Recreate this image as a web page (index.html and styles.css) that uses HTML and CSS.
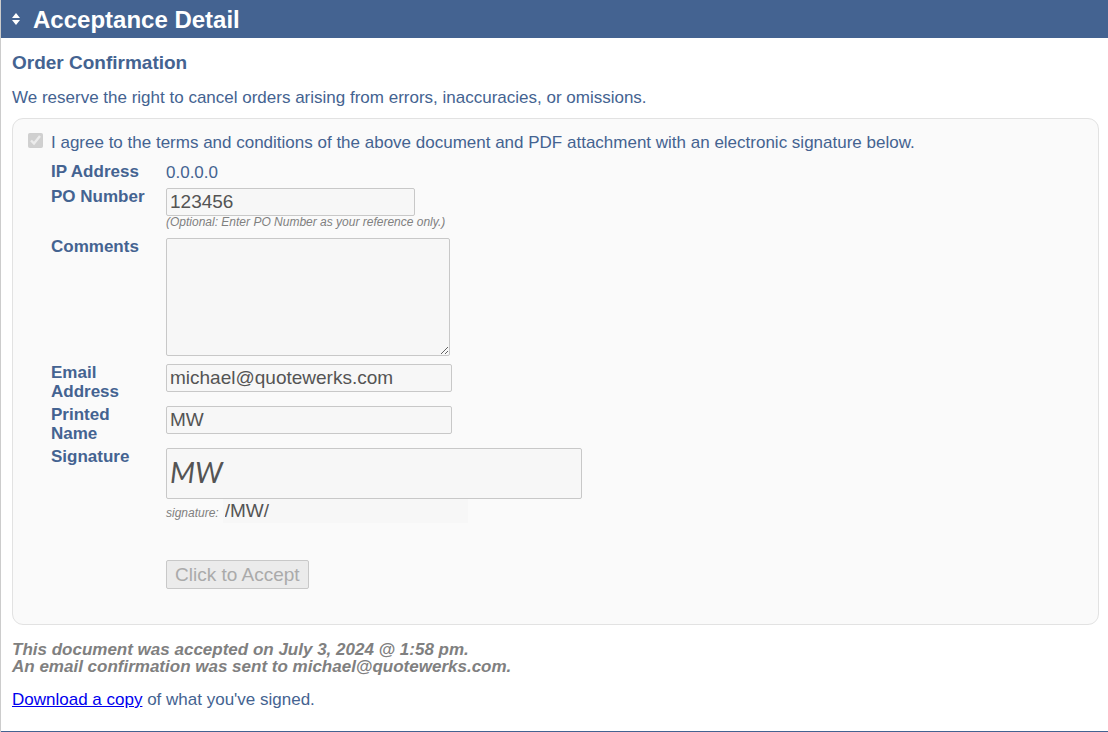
FILE: index.html
```
<!DOCTYPE html>
<html lang="en">
<head>
  <meta charset="UTF-8">
  <meta name="viewport" content="width=device-width, initial-scale=1.0">
  <title>Acceptance Detail</title>
  <link rel="stylesheet" href="styles.css">
</head>
<body>
  <main class="page">
    <header class="section-header">
      <svg class="toggle" viewBox="0 0 10 12" aria-hidden="true">
        <path d="M5 0 L9 5 H1 Z M1 7 H9 L5 12 Z" fill="#fff"/>
      </svg>
      <h1>Acceptance Detail</h1>
    </header>

    <div class="content">
      <h2>Order Confirmation</h2>
      <p class="notice">We reserve the right to cancel orders arising from errors, inaccuracies, or omissions.</p>

      <form class="panel">
        <div class="agree">
          <input type="checkbox" id="agree" checked disabled>
          <label for="agree">I agree to the terms and conditions of the above document and PDF attachment with an electronic signature below.</label>
        </div>

        <div class="fields">
          <span class="name">IP Address</span>
          <div class="field ip">0.0.0.0</div>

          <label class="name" for="po">PO Number</label>
          <div class="field po">
            <input type="text" id="po" class="box short" value="123456" disabled>
            <span class="hint">(Optional: Enter PO Number as your reference only.)</span>
          </div>

          <label class="name" for="comments">Comments</label>
          <div class="field comments">
            <textarea id="comments" class="box" disabled></textarea>
          </div>

          <label class="name" for="email">Email Address</label>
          <div class="field">
            <input type="text" id="email" class="box medium" value="michael@quotewerks.com" disabled>
          </div>

          <label class="name" for="printed">Printed Name</label>
          <div class="field">
            <input type="text" id="printed" class="box medium" value="MW" disabled>
          </div>

          <label class="name" for="signature">Signature</label>
          <div class="field">
            <input type="text" id="signature" class="box sign" value="MW" disabled>
            <div class="typed">
              <label class="hint" for="typed">signature:</label>
              <input type="text" id="typed" value="/MW/" disabled>
            </div>
            <button type="submit" class="accept" disabled>Click to Accept</button>
          </div>
        </div>
      </form>

      <p class="accepted">This document was accepted on July 3, 2024 @ 1:58 pm.<br>An email confirmation was sent to michael@quotewerks.com.</p>
      <p class="download"><a href="#">Download a copy</a> of what you've signed.</p>
    </div>
  </main>
</body>
</html>
```
FILE: styles.css
```
* { box-sizing: border-box; }
body { margin: 0; font: 17px/19px Arial, "Liberation Sans", sans-serif; color: #446391; background: #fff; }
h1, h2, p { margin: 0; }
.page { border-left: 1px solid #ccc; }

.section-header { display: flex; align-items: center; gap: 12px; height: 38px; padding: 0 10px; background: #446391; color: #fff; }
.section-header h1 { padding-top: 2px; font-size: 24px; line-height: 28px; }
.toggle { width: 10px; height: 12px; }

.content { padding: 14px 9px 22px 11px; border-bottom: 1px solid #446391; }
.content h2 { font-size: 19px; line-height: 22px; }
.notice { margin: 14px 0 11px; }

/* Signed form */
.panel { padding: 14px 15px 35px; border: 1px solid #e2e2e2; border-radius: 11px; background: #fafafa; }
.agree { display: flex; align-items: flex-start; gap: 8px; }
.agree input { width: 15px; height: 15px; margin: 0; }
.fields { display: grid; grid-template-columns: 107px 1fr; column-gap: 8px; row-gap: 4px; margin: 10px 0 0 23px; }
.name { max-width: 96px; font-weight: bold; }
.field { padding-top: 1px; }
.ip { padding-bottom: 1px; }
.po { padding-bottom: 5px; }
.comments { padding-bottom: 3px; }
.hint { font-size: 12px; line-height: 12px; font-style: italic; color: gray; }
.po .hint { display: block; }

.box { display: block; height: 28px; margin: 0; padding: 1px 3px; border: 1px solid #c8c8c8; border-radius: 2px; background: #f7f7f7; color: #545454; font: 19px Arial, "Liberation Sans", sans-serif; }
.short { width: 249px; }
.medium { width: 286px; margin-bottom: 9px; }
textarea.box { width: 284px; height: 118px; resize: both; }
.box.sign { width: 416px; height: 51px; padding-bottom: 6px; font: italic 29px "Segoe Print", Lato, cursive; }

.typed { display: flex; align-items: baseline; gap: 4px; }
.typed input { width: 245px; height: 24px; padding: 0 2px; border: 0; background: #f7f7f7; color: #545454; font: 19px Arial, "Liberation Sans", sans-serif; }
.accept { display: block; height: 29px; margin-top: 37px; padding: 1px 8px; border: 1px solid #c8c8c8; border-radius: 2px; background: #ebebeb; color: #aaa; font: 19px Arial, "Liberation Sans", sans-serif; }

.accepted { margin-top: 16px; line-height: 17px; font-weight: bold; font-style: italic; color: gray; }
.download { margin-top: 15px; }
.download a { color: #00e; }
```
